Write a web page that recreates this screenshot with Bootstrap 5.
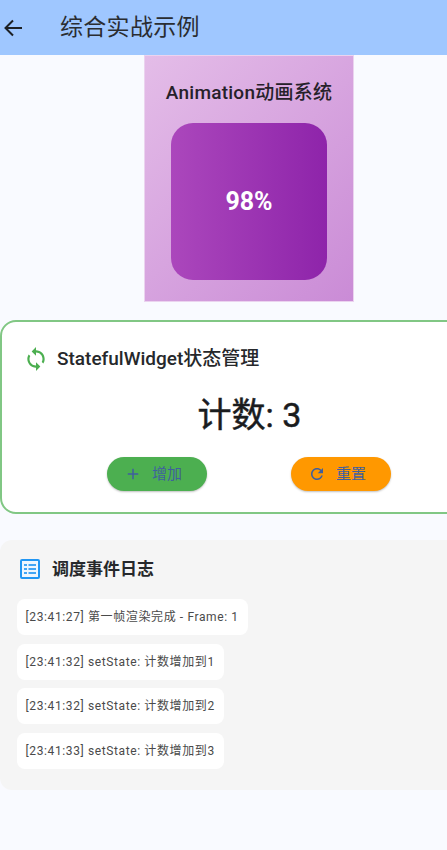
<!DOCTYPE html>
<html lang="zh">
<head>
<meta charset="utf-8">
<title>综合实战示例</title>
<link rel="stylesheet" href="https://cdn.jsdelivr.net/npm/bootstrap@5.3.0/dist/css/bootstrap.min.css">
<style>
html,body{height:100%;overflow:hidden}
body{background:#f9faff;font-family:Roboto,"Noto Sans CJK SC",sans-serif;color:#1a1c1e}
.app-top{height:55px;background:#9fc7ff}
.app-title{font-size:23px;line-height:28px;margin-left:35px;letter-spacing:.3px;color:#2a2d31}
.back-ico{margin-left:1px;width:24px;height:24px}
.stage{width:498px}
.anim-box{width:210px;height:247px;padding-top:25px;background:linear-gradient(135deg,#e4bde8,#ca8bd6);outline:1px solid #ebd3ef;outline-offset:-1px}
.anim-title{font-size:19px;line-height:26px;font-weight:500;letter-spacing:.25px;color:#26212a}
.anim-square{width:156.7px;height:156.7px;margin-top:17px;border-radius:22px;background:linear-gradient(90deg,#ab47bc,#8e24aa);color:#fff;font-size:25px;font-weight:700}
.state-panel{margin-top:18px;height:194px;border:2px solid #81c784;border-radius:16px;background:#fff;padding:22px 24px 0 21px}
.state-head{font-size:19px;font-weight:500;line-height:28px;gap:8px;margin-top:1px;color:#26282b}
.count-line{font-size:34px;line-height:44px;margin-top:20px;padding-left:4px;font-weight:400;-webkit-text-stroke:.5px #1a1c1e}
.pill-row{margin-top:20px;margin-left:84px;gap:84px}
.pill-btn{width:100px;height:34px;border:0;border-radius:17px;padding:0 8px 0 0;color:#3f5f9e;font-size:15px;box-shadow:0 1px 2px rgba(0,0,0,.25);gap:10px}
.pill-green{background:#4caf50}
.pill-orange{background:#ff9800}
.log-panel{margin-top:26px;height:250px;background:#f5f5f5;border-radius:12px;padding:17px 17px}
.log-head{font-size:17px;font-weight:700;line-height:24px;gap:12px;margin-left:3px;margin-bottom:18px;color:#26282b}
.log-row{display:table;background:#fff;border-radius:8px;padding:9px 9px 9px 8.5px;font-size:12px;line-height:18px;letter-spacing:.62px;color:#4a4a4a;margin-bottom:8.5px}
</style>
</head>
<body>
<div class="app-top d-flex align-items-center">
  <svg class="back-ico" viewBox="0 0 24 24" fill="none" stroke="#1d2024" stroke-width="2"><path d="M21 12H4.5M12 4.5 4.5 12l7.5 7.5"/></svg>
  <div class="app-title">综合实战示例</div>
</div>
<div class="stage">
  <div class="anim-box mx-auto text-center">
    <div class="anim-title">Animation动画系统</div>
    <div class="anim-square mx-auto d-flex align-items-center justify-content-center">98%</div>
  </div>
  <div class="state-panel">
    <div class="state-head d-flex align-items-center">
      <svg width="26" height="26" viewBox="0 0 24 24" fill="#4caf50"><path d="M12 4V1L8 5l4 4V6c3.31 0 6 2.69 6 6 0 1.01-.25 1.97-.7 2.8l1.46 1.46C19.54 15.03 20 13.57 20 12c0-4.42-3.58-8-8-8zm0 14c-3.31 0-6-2.69-6-6 0-1.01.25-1.97.7-2.8L5.24 7.74C4.46 8.97 4 10.43 4 12c0 4.42 3.58 8 8 8v3l4-4-4-4v3z"/></svg>
      <span>StatefulWidget状态管理</span>
    </div>
    <div class="count-line text-center">计数: 3</div>
    <div class="pill-row d-flex">
      <button class="pill-btn pill-green d-flex align-items-center justify-content-center">
        <svg width="18" height="18" viewBox="0 0 24 24" fill="#3f5f9e"><path d="M19 13h-6v6h-2v-6H5v-2h6V5h2v6h6v2z"/></svg><span>增加</span>
      </button>
      <button class="pill-btn pill-orange d-flex align-items-center justify-content-center">
        <svg width="18" height="18" viewBox="0 0 24 24" fill="#3f5f9e"><path d="M17.65 6.35C16.2 4.9 14.21 4 12 4c-4.42 0-7.99 3.58-7.99 8s3.57 8 7.99 8c3.73 0 6.84-2.55 7.73-6h-2.08c-.82 2.33-3.04 4-5.65 4-3.31 0-6-2.69-6-6s2.69-6 6-6c1.66 0 3.14.69 4.22 1.78L13 11h7V4l-2.35 2.35z"/></svg><span>重置</span>
      </button>
    </div>
  </div>
  <div class="log-panel">
    <div class="log-head d-flex align-items-center">
      <svg width="20" height="20" viewBox="0 0 20 20"><rect x="1" y="1" width="18" height="18" rx="1" fill="#eef6fe" stroke="#2196f3" stroke-width="2"/><path fill="#42a5f5" d="M4 5h3v2H4zM8.500 5H16v2H8.500zM4 9h3v2H4zM8.500 9H16v2H8.500zM4 13h3v2H4zM8.500 13H16v2H8.500z"/></svg>
      <span>调度事件日志</span>
    </div>
    <div class="log-row">[23:41:27] 第一帧渲染完成 - Frame: 1</div>
    <div class="log-row">[23:41:32] setState: 计数增加到1</div>
    <div class="log-row">[23:41:32] setState: 计数增加到2</div>
    <div class="log-row">[23:41:33] setState: 计数增加到3</div>
  </div>
</div>
<script src="https://cdn.jsdelivr.net/npm/bootstrap@5.3.0/dist/js/bootstrap.bundle.min.js"></script>
</body>
</html>
